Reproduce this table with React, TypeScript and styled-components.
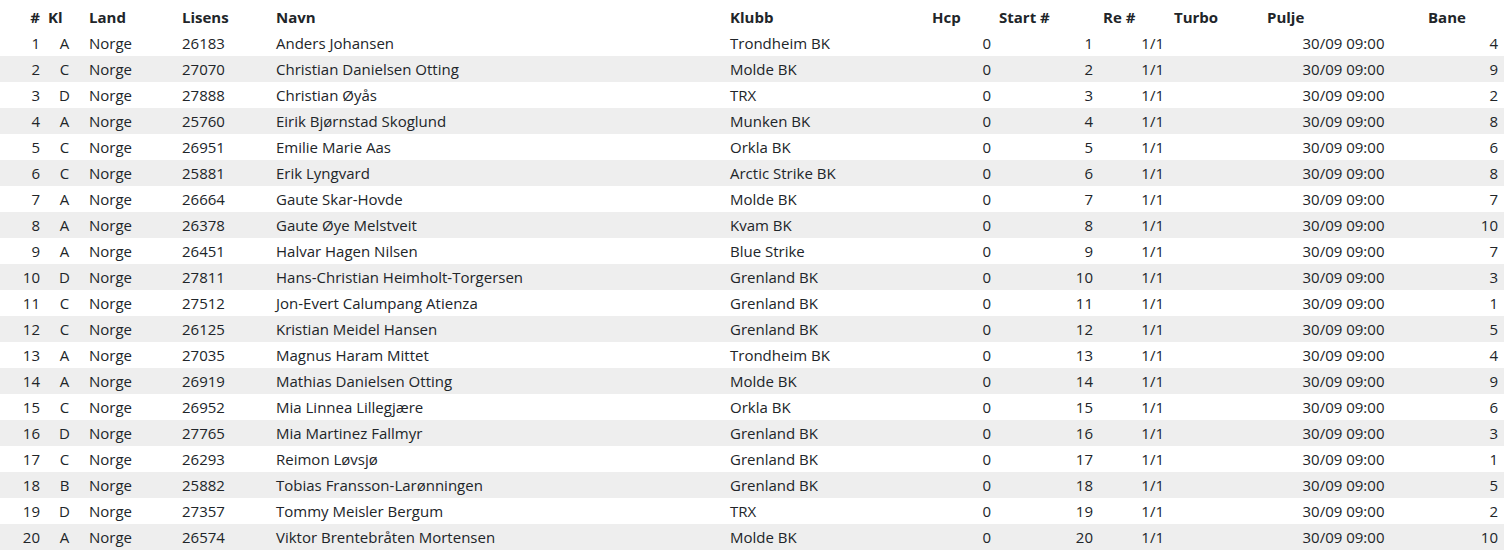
import React from "react";
import styled, { createGlobalStyle } from "styled-components";

const GlobalStyle = createGlobalStyle`
  html, body { margin: 0; padding: 0; background: #fff; }
  body {
    font-family: "Open Sans", "Noto Sans", sans-serif;
    font-size: 15px;
    color: #212529;
  }
`;

type Align = "left" | "right" | "center";

interface Col {
  key: string;
  label: string;
  width: number;
  head: Align;
  body: Align;
  padR?: number;
}

const cols: Col[] = [
  { key: "n", label: "#", width: 44, head: "right", body: "right" },
  { key: "kl", label: "Kl", width: 41, head: "left", body: "center" },
  { key: "land", label: "Land", width: 93, head: "left", body: "left" },
  { key: "lisens", label: "Lisens", width: 94, head: "left", body: "left" },
  { key: "navn", label: "Navn", width: 454, head: "left", body: "left" },
  { key: "klubb", label: "Klubb", width: 202, head: "left", body: "left" },
  { key: "hcp", label: "Hcp", width: 67, head: "left", body: "right" },
  { key: "start", label: "Start #", width: 104, head: "left", body: "right", padR: 6 },
  { key: "re", label: "Re #", width: 71, head: "left", body: "right", padR: 6 },
  { key: "turbo", label: "Turbo", width: 93, head: "left", body: "left" },
  { key: "pulje", label: "Pulje", width: 161, head: "left", body: "center" },
  { key: "bane", label: "Bane", width: 80, head: "left", body: "right", padR: 6 },
];

const raw: [string, string, string, string, string, string][] = [
  ["A", "26183", "Anders Johansen", "Trondheim BK", "4", "1"],
  ["C", "27070", "Christian Danielsen Otting", "Molde BK", "9", "2"],
  ["D", "27888", "Christian Øyås", "TRX", "2", "3"],
  ["A", "25760", "Eirik Bjørnstad Skoglund", "Munken BK", "8", "4"],
  ["C", "26951", "Emilie Marie Aas", "Orkla BK", "6", "5"],
  ["C", "25881", "Erik Lyngvard", "Arctic Strike BK", "8", "6"],
  ["A", "26664", "Gaute Skar-Hovde", "Molde BK", "7", "7"],
  ["A", "26378", "Gaute Øye Melstveit", "Kvam BK", "10", "8"],
  ["A", "26451", "Halvar Hagen Nilsen", "Blue Strike", "7", "9"],
  ["D", "27811", "Hans-Christian Heimholt-Torgersen", "Grenland BK", "3", "10"],
  ["C", "27512", "Jon-Evert Calumpang Atienza", "Grenland BK", "1", "11"],
  ["C", "26125", "Kristian Meidel Hansen", "Grenland BK", "5", "12"],
  ["A", "27035", "Magnus Haram Mittet", "Trondheim BK", "4", "13"],
  ["A", "26919", "Mathias Danielsen Otting", "Molde BK", "9", "14"],
  ["C", "26952", "Mia Linnea Lillegjære", "Orkla BK", "6", "15"],
  ["D", "27765", "Mia Martinez Fallmyr", "Grenland BK", "3", "16"],
  ["C", "26293", "Reimon Løvsjø", "Grenland BK", "1", "17"],
  ["B", "25882", "Tobias Fransson-Larønningen", "Grenland BK", "5", "18"],
  ["D", "27357", "Tommy Meisler Bergum", "TRX", "2", "19"],
  ["A", "26574", "Viktor Brentebråten Mortensen", "Molde BK", "10", "20"],
];

const rows = raw.map(([kl, lisens, navn, klubb, bane, start], i) => ({
  n: String(i + 1),
  kl,
  land: "Norge",
  lisens,
  navn,
  klubb,
  hcp: "0",
  start,
  re: "1/1",
  turbo: "",
  pulje: "30/09 09:00",
  bane,
})) as Record<string, string>[];

const Table = styled.table`
  width: 1504px;
  table-layout: fixed;
  border-collapse: collapse;
  border-spacing: 0;
`;

const HeadCell = styled.th<{ $align: Align; $padR?: number }>`
  height: 30px;
  box-sizing: border-box;
  padding: 4px ${(p) => p.$padR ?? 4}px 0 4px;
  text-align: ${(p) => p.$align};
  font-weight: 700;
  white-space: nowrap;
  vertical-align: middle;
  line-height: 26px;
`;

const BodyRow = styled.tr`
  &:nth-child(even) {
    background: #eeeeee;
  }
`;

const Cell = styled.td<{ $align: Align; $padR?: number }>`
  height: 26px;
  box-sizing: border-box;
  padding: 0 ${(p) => p.$padR ?? 4}px 0 4px;
  text-align: ${(p) => p.$align};
  line-height: 26px;
  white-space: nowrap;
  overflow: hidden;
`;

export default function App() {
  return (
    <>
      <GlobalStyle />
      <Table>
        <colgroup>
          {cols.map((c) => (
            <col key={c.key} style={{ width: c.width }} />
          ))}
        </colgroup>
        <thead>
          <tr>
            {cols.map((c) => (
              <HeadCell key={c.key} $align={c.head}>
                {c.label}
              </HeadCell>
            ))}
          </tr>
        </thead>
        <tbody>
          {rows.map((r) => (
            <BodyRow key={r.n}>
              {cols.map((c) => (
                <Cell key={c.key} $align={c.body} $padR={c.padR}>
                  {r[c.key]}
                </Cell>
              ))}
            </BodyRow>
          ))}
        </tbody>
      </Table>
    </>
  );
}
